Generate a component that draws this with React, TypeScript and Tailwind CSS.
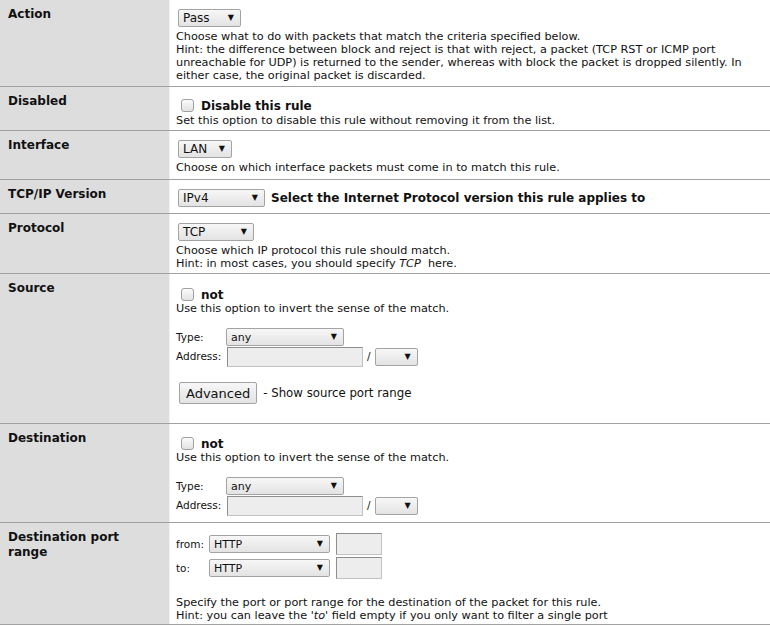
import React from "react";

const font = { fontFamily: '"DejaVu Sans", Verdana, sans-serif' };

function Select({ value, width, small }: { value: string; width: number; small?: boolean }) {
  return (
    <div
      className={`inline-flex items-center justify-between h-[18px] border border-[#a3a3a3] rounded-[2px] bg-gradient-to-b from-[#f7f7f7] to-[#e3e3e3] pl-[4px] pr-[6px] text-[#111] ${small ? "text-[11px]" : "text-[12px]"}`}
      style={{ width }}
    >
      <span className="leading-none">{value}</span>
      <span className="text-[8px] leading-none">▼</span>
    </div>
  );
}

function Checkbox() {
  return <div className="w-[13px] h-[13px] rounded-[3px] border border-[#a0a0a0] bg-gradient-to-b from-[#fbfbfb] to-[#e2e2e2]" />;
}

function Input({ width, height = 20 }: { width: number; height?: number }) {
  return (
    <div
      className="bg-[#ededed] border border-[#c2c2c2] border-t-[#8e8e8e] border-l-[#8e8e8e]"
      style={{ width, height }}
    />
  );
}

function Row({ label, children, minH }: { label: React.ReactNode; children: React.ReactNode; minH: number }) {
  return (
    <div className="flex border-b border-[#a0a0a0]" style={{ minHeight: minH }}>
      <div className="w-[170px] shrink-0 bg-[#dddddd] border-r border-[#f2f2f2] pl-[8px] pt-[7px] text-[12px] font-bold leading-[15px] text-[#111]">
        {label}
      </div>
      <div className="flex-1 bg-white pl-[6px] pr-[4px] text-[11.25px] leading-[13px] text-[#111]">{children}</div>
    </div>
  );
}

function AddressBlock() {
  return (
    <div className="mt-[13px] text-[10.5px]">
      <div className="flex items-center h-[18px]">
        <span className="w-[50px]">Type:</span>
        <Select value="any" width={118} small />
      </div>
      <div className="flex items-center h-[21px]">
        <span className="w-[51px]">Address:</span>
        <Input width={136} />
        <span className="mx-[4px]">/</span>
        <Select value="" width={43} small />
      </div>
    </div>
  );
}

export default function App() {
  return (
    <div className="w-[770px] bg-white" style={font}>
      <Row label="Action" minH={87}>
        <div className="pt-[9px] pl-[2px]">
          <Select value="Pass" width={63} />
        </div>
        <div className="mt-[3px]">
          Choose what to do with packets that match the criteria specified below.
          <br />
          Hint: the difference between block and reject is that with reject, a packet (TCP RST or ICMP port unreachable for UDP) is returned to the sender, whereas with block the packet is dropped silently. In either case, the original packet is discarded.
        </div>
      </Row>
      <Row label="Disabled" minH={44}>
        <div className="flex items-center gap-[7px] pt-[10px] pl-[5px] h-[27px]">
          <Checkbox />
          <span className="text-[12px] font-bold leading-[15px] mt-[2px]">Disable this rule</span>
        </div>
        <div>Set this option to disable this rule without removing it from the list.</div>
      </Row>
      <Row label="Interface" minH={49}>
        <div className="pt-[9px] pl-[2px]">
          <Select value="LAN" width={54} />
        </div>
        <div className="mt-[3px]">Choose on which interface packets must come in to match this rule.</div>
      </Row>
      <Row label="TCP/IP Version" minH={34}>
        <div className="flex items-center gap-[6px] pt-[9px] pl-[2px]">
          <Select value="IPv4" width={87} />
          <span className="text-[12px] font-bold">Select the Internet Protocol version this rule applies to</span>
        </div>
      </Row>
      <Row label="Protocol" minH={60}>
        <div className="pt-[9px] pl-[2px]">
          <Select value="TCP" width={76} />
        </div>
        <div className="mt-[3px]">
          Choose which IP protocol this rule should match.
          <br />
          Hint: in most cases, you should specify <i>TCP</i>&nbsp; here.
        </div>
      </Row>
      <Row label="Source" minH={150}>
        <div className="flex items-center gap-[7px] pt-[12px] pl-[5px] h-[28px]">
          <Checkbox />
          <span className="text-[12px] font-bold leading-[15px] mt-[2px]">not</span>
        </div>
        <div>Use this option to invert the sense of the match.</div>
        <AddressBlock />
        <div className="flex items-center gap-[6px] mt-[15px]">
          <div className="ml-[3px] h-[22px] px-[6px] flex items-center border border-[#a3a3a3] rounded-[2px] bg-gradient-to-b from-[#f7f7f7] to-[#e3e3e3] text-[13px]">
            Advanced
          </div>
          <span className="text-[11.75px]">- Show source port range</span>
        </div>
      </Row>
      <Row label="Destination" minH={99}>
        <div className="flex items-center gap-[7px] pt-[11px] pl-[5px] h-[27px]">
          <Checkbox />
          <span className="text-[12px] font-bold leading-[15px] mt-[2px]">not</span>
        </div>
        <div>Use this option to invert the sense of the match.</div>
        <AddressBlock />
      </Row>
      <Row
        label={
          <>
            Destination port
            <br />
            range
          </>
        }
        minH={102}
      >
        <div className="pt-[9px] text-[10.5px]">
          <div className="flex items-center h-[24px]">
            <span className="w-[33px]">from:</span>
            <Select value="HTTP" width={121} small />
            <div className="ml-[6px]">
              <Input width={46} height={22} />
            </div>
          </div>
          <div className="flex items-center h-[24px]">
            <span className="w-[33px]">to:</span>
            <Select value="HTTP" width={121} small />
            <div className="ml-[6px]">
              <Input width={46} height={22} />
            </div>
          </div>
        </div>
        <div className="mt-[16px]">
          Specify the port or port range for the destination of the packet for this rule.
          <br />
          Hint: you can leave the <i>'to'</i> field empty if you only want to filter a single port
        </div>
      </Row>
    </div>
  );
}
